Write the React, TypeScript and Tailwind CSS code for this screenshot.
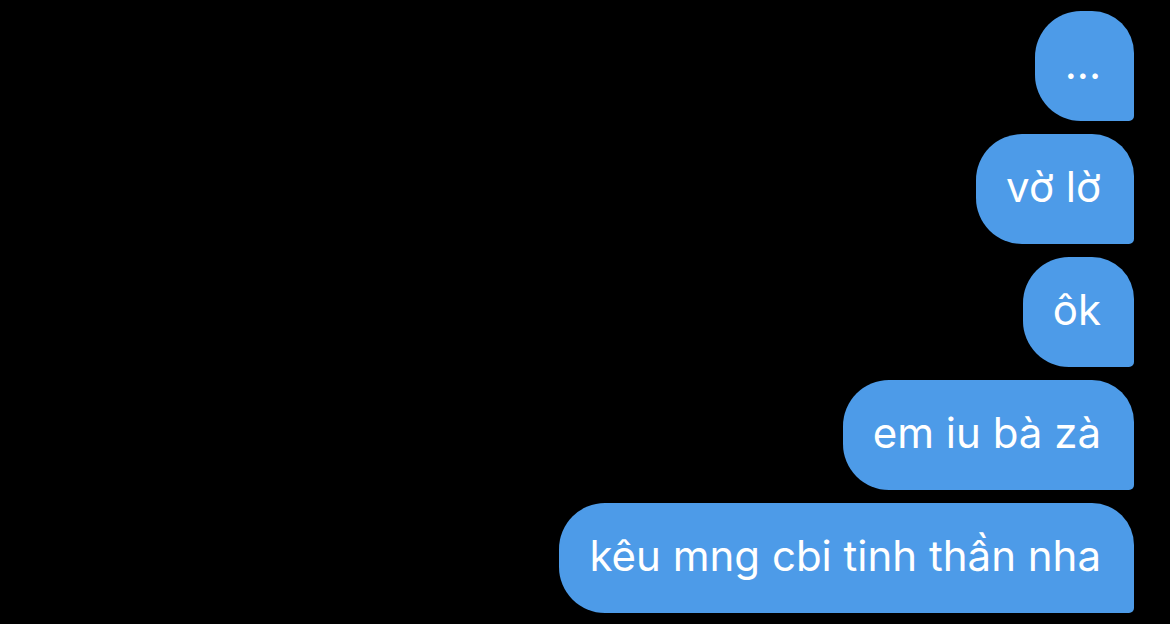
const MESSAGES = ['...', 'vờ lờ', 'ôk', 'em iu bà zà', 'kêu mng cbi tinh thần nha'];

export default function App() {
  return (
    <div className="min-h-screen w-full bg-black">
      <div className="flex flex-col items-end gap-[13px] pt-[11px] pr-[36px]">
        {MESSAGES.map((text) => (
          <div
            key={text}
            className="flex h-[110px] items-center rounded-tl-[46px] rounded-bl-[46px] rounded-tr-[42px] rounded-br-[5px] bg-[#4d9be8] pl-[30px] pr-[33px] pb-[5px] text-[42px] text-white"
            style={{ fontFamily: 'Inter, "Noto Sans", sans-serif' }}
          >
            {text}
          </div>
        ))}
      </div>
    </div>
  );
}
